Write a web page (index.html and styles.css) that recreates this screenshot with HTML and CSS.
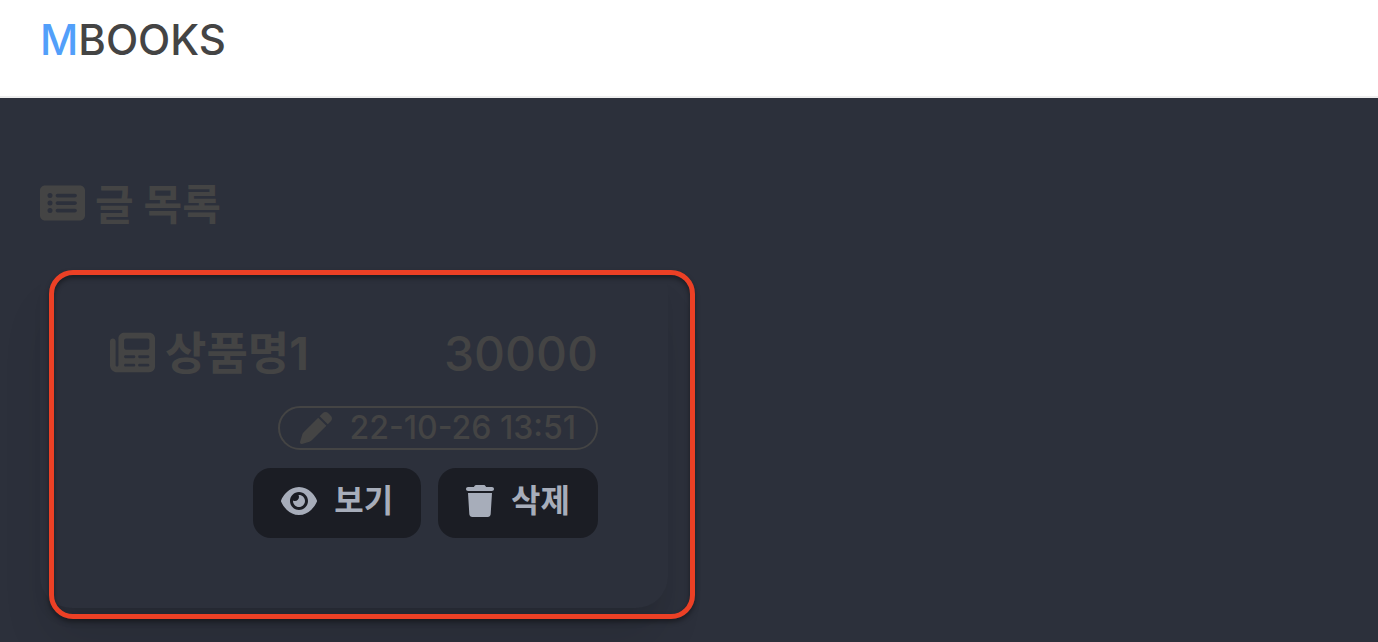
FILE: index.html
```html
<!DOCTYPE html>
<html lang="ko">
<head>
    <meta charset="UTF-8">
    <meta name="viewport" content="width=device-width, initial-scale=1.0">
    <link rel="stylesheet" href="styles.css">
    <title>MBOOKS</title>
</head>
<body>
    <header class="header">
        <a class="logo" href="#"><span class="logo-point">M</span><span>BOOKS</span></a>
    </header>

    <main class="content">
        <h1 class="page-title">
            <svg class="icon-list" viewBox="0 0 576 512" aria-hidden="true"><path fill-rule="evenodd" d="M0 96C0 60.700 28.700 32 64 32H512c35.300 0 64 28.700 64 64V416c0 35.300-28.700 64-64 64H64c-35.300 0-64-28.700-64-64V96zM128 288a32 32 0 1 0 0-64 32 32 0 1 0 0 64zM128 192a32 32 0 1 0 0-64 32 32 0 1 0 0 64zM128 384a32 32 0 1 0 0-64 32 32 0 1 0 0 64zM224 136c-13.300 0-24 10.700-24 24s10.700 24 24 24H448c13.300 0 24-10.700 24-24s-10.700-24-24-24H224zM224 232c-13.300 0-24 10.700-24 24s10.700 24 24 24H448c13.300 0 24-10.700 24-24s-10.700-24-24-24H224zM224 328c-13.300 0-24 10.700-24 24s10.700 24 24 24H448c13.300 0 24-10.700 24-24s-10.700-24-24-24H224z"/></svg>
            <span class="title-text">글 목록</span>
        </h1>

        <article class="card">
            <div class="card-head">
                <h2 class="card-title">
                    <svg class="icon-news" viewBox="0 0 512 512" aria-hidden="true"><path fill-rule="evenodd" d="M96 96c0-35.300 28.700-64 64-64H448c35.300 0 64 28.700 64 64V416c0 35.300-28.700 64-64 64H80c-44.200 0-80-35.800-80-80V128c0-17.700 14.300-32 32-32s32 14.300 32 32V400c0 8.800 7.200 16 16 16s16-7.200 16-16V96zM160 120v80c0 13.300 10.700 24 24 24H424c13.300 0 24-10.700 24-24V120c0-13.300-10.700-24-24-24H184c-13.300 0-24 10.700-24 24zM176 288a16 16 0 0 0 0 32h96a16 16 0 0 0 0-32zM336 288a16 16 0 0 0 0 32h96a16 16 0 0 0 0-32zM176 384a16 16 0 0 0 0 32h96a16 16 0 0 0 0-32zM336 384a16 16 0 0 0 0 32h96a16 16 0 0 0 0-32z"/></svg>
                    <span class="title-text">상품명1</span>
                </h2>
                <span class="price">30000</span>
            </div>
            <div class="badge">
                <svg class="icon-pen" viewBox="0 0 512 512" aria-hidden="true"><path d="M362.700 19.300L314.300 67.700 444.300 197.700l48.400-48.400c25-25 25-65.500 0-90.500L453.300 19.300c-25-25-65.500-25-90.500 0zm-71 71L58.600 323.500c-10.400 10.400-18 23.300-22.200 37.400L1 481.200C-1.500 489.700 .8 498.800 7 505s15.300 8.500 23.700 6.100l120.300-35.400c14.100-4.200 27-11.800 37.400-22.200L421.700 220.300 291.700 90.300z"/></svg>
                <time datetime="2022-10-26T13:51">22-10-26 13:51</time>
            </div>
            <div class="card-actions">
                <button class="btn" type="button">
                    <svg class="icon-eye" viewBox="0 0 576 512" aria-hidden="true"><path fill-rule="evenodd" d="M288 32c-80.800 0-145.500 36.800-192.600 80.600C48.600 156 17.300 208 2.500 243.700c-3.300 7.900-3.300 16.700 0 24.600C17.300 304 48.600 356 95.400 399.400C142.500 443.200 207.200 480 288 480s145.500-36.800 192.600-80.600c46.800-43.500 78.100-95.400 93-131.100c3.300-7.900 3.300-16.700 0-24.600c-14.900-35.700-46.200-87.700-93-131.100C433.500 68.800 368.800 32 288 32zM432 256c0 79.500-64.500 144-144 144s-144-64.500-144-144s64.500-144 144-144s144 64.500 144 144zM288 192c0 35.300-28.700 64-64 64c-11.500 0-22.300-3-31.600-8.400c-.2 2.800-.4 5.500-.4 8.400c0 53 43 96 96 96s96-43 96-96s-43-96-96-96c-2.800 0-5.600 .1-8.400 .4c5.300 9.300 8.400 20.100 8.400 31.600z"/></svg>
                    <span>보기</span>
                </button>
                <button class="btn" type="button">
                    <svg class="icon-trash" viewBox="0 0 448 512" aria-hidden="true"><path d="M135.200 17.700L128 32H32C14.300 32 0 46.300 0 64S14.300 96 32 96H416c17.700 0 32-14.300 32-32s-14.300-32-32-32H320l-7.200-14.300C307.400 6.800 296.300 0 284.200 0H163.800c-12.100 0-23.200 6.800-28.600 17.700zM416 128H32L53.200 467c1.600 25.300 22.600 45 47.900 45H346.900c25.300 0 46.300-19.700 47.900-45L416 128z"/></svg>
                    <span>삭제</span>
                </button>
            </div>
            <div class="highlight"></div>
        </article>
    </main>
</body>
</html>
```
FILE: styles.css
```css
* {
    padding: 0;
    margin: 0;
    box-sizing: border-box;
}
body {
    min-height: 100vh;
    overflow-x: hidden;
    background-color: #2c303b;
    color: #444;
    font-family: Inter, "Noto Sans CJK KR", sans-serif;
}
svg {
    flex: none;
    fill: currentColor;
}

.header {
    padding: 16px 40px 32px;
    background-color: #fff;
    border-bottom: 2px solid #eee;
}
.logo {
    display: inline-flex;
    color: #444;
    font-size: 42px;
    font-weight: 500;
    line-height: 48px;
    text-decoration: none;
}
.logo-point {
    color: #529ffa;
}

.content {
    padding: 78px 40px 32px;
}
.page-title {
    display: flex;
    align-items: center;
    gap: 10px;
    margin-bottom: 32px;
    font-size: 42px;
    line-height: 50px;
}
.title-text, .price {
    padding-top: 4px;
}
.icon-list {
    width: 45px;
    height: 40px;
}

.card {
    position: relative;
    display: flex;
    flex-direction: column;
    align-items: flex-end;
    gap: 18px;
    max-width: 628px;
    padding: 58px 70px 70px;
    border-radius: 32px;
    box-shadow: 0 40px 50px -10px rgba(0, 0, 0, .1), 0 16px 20px -12px rgba(0, 0, 0, .1);
}
.card-head {
    display: flex;
    justify-content: space-between;
    align-items: center;
    width: 100%;
    padding-bottom: 4px;
    line-height: 60px;
}
.card-title {
    display: flex;
    align-items: center;
    gap: 10px;
    font-size: 45px;
}
.icon-news {
    width: 45px;
    height: 45px;
}
.price {
    font-size: 48px;
    font-weight: 500;
}

.badge {
    display: flex;
    align-items: center;
    gap: 17px;
    padding: 0 20px;
    border: 2px solid #444;
    border-radius: 22px;
    font-size: 32px;
    font-weight: 500;
    line-height: 40px;
}
.icon-pen {
    width: 32px;
    height: 32px;
}

.card-actions {
    display: flex;
    gap: 17px;
}
.btn {
    display: flex;
    align-items: center;
    gap: 17px;
    padding: 0 28px 4px;
    border: 0;
    border-radius: 18px;
    background-color: #1b1d24;
    color: #a7adba;
    font-family: inherit;
    font-size: 32px;
    font-weight: 700;
    line-height: 66px;
    cursor: pointer;
}
.icon-eye {
    width: 36px;
    height: 32px;
}
.icon-trash {
    width: 28px;
    height: 32px;
}

/* red frame over the card */
.highlight {
    position: absolute;
    inset: 8px -27px -11px 9px;
    border: 5px solid #ec4025;
    border-radius: 24px;
    box-shadow: 0 3px 5px rgba(0, 0, 0, .4), inset 0 3px 5px rgba(0, 0, 0, .4);
    pointer-events: none;
}
```
